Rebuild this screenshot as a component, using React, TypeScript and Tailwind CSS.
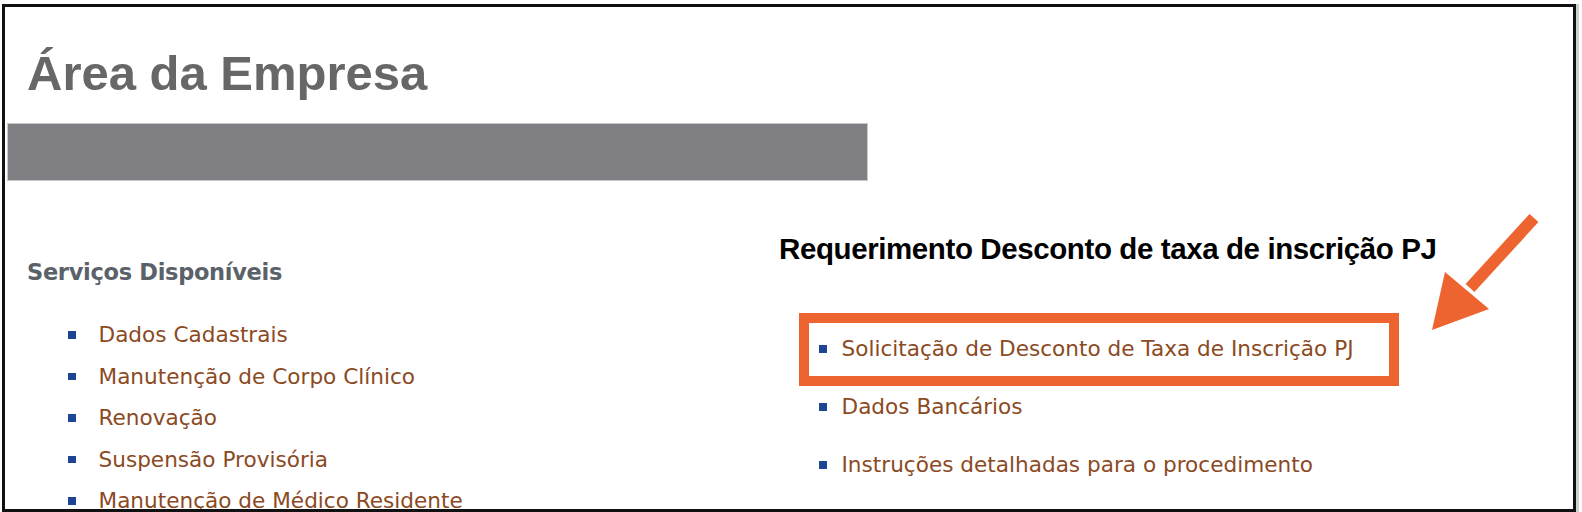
import React from 'react';

const leftItems = [
  'Dados Cadastrais',
  'Manutenção de Corpo Clínico',
  'Renovação',
  'Suspensão Provisória',
  'Manutenção de Médico Residente',
];

const rightItems = [
  'Solicitação de Desconto de Taxa de Inscrição PJ',
  'Dados Bancários',
  'Instruções detalhadas para o procedimento',
];

const Bullet = () => <span className="block w-[7.5px] h-[7.5px] bg-[#1e4494] shrink-0" />;

export default function App() {
  return (
    <div className="w-[1582px] h-[512px] bg-white overflow-hidden pt-[4px] pl-[2px]">
      <div className="relative w-[1574px] h-[508px] border-[3px] border-[#111] overflow-hidden shadow-[3px_0_0_#cfcfcf] font-['Liberation_Sans',Arial,sans-serif]">
        <h1 className="ml-[22px] mt-[42px] text-[49px] leading-[49px] font-bold text-[#676767]">
          Área da Empresa
        </h1>
        <div className="ml-[2px] mt-[25px] w-[861px] h-[58px] bg-[#808084] border border-[#c9c9cc]" />

        <div className="flex">
          {/* serviços */}
          <div className="w-[752px] pl-[22px] pt-[76px] font-['DejaVu_Sans',Verdana,sans-serif]">
            <h2 className="text-[22.5px] leading-[30px] font-bold tracking-[-0.3px] text-[#5b6168]">
              Serviços Disponíveis
            </h2>
            <ul className="mt-[27px]">
              {leftItems.map((item) => (
                <li key={item} className="flex items-center h-[41.5px] pl-[41px] gap-[23px]">
                  <Bullet />
                  <span className="text-[21.6px] leading-[41.5px] text-[#8b4a1f] whitespace-nowrap">{item}</span>
                </li>
              ))}
            </ul>
          </div>

          {/* requerimento */}
          <div className="flex-1 pl-[22px] pt-[51px]">
            <h2 className="text-[29.5px] leading-[34px] font-bold tracking-[-0.4px] text-black whitespace-nowrap">
              Requerimento Desconto de taxa de inscrição PJ
            </h2>
            <ul className="mt-[54px] font-['DejaVu_Sans',Verdana,sans-serif]">
              {rightItems.map((item) => (
                <li key={item} className="flex items-center h-[58px] pl-[40px] gap-[15px]">
                  <Bullet />
                  <span className="text-[21.6px] leading-[58px] text-[#8b4a1f] whitespace-nowrap">{item}</span>
                </li>
              ))}
            </ul>
          </div>
        </div>

        {/* destaque */}
        <div className="absolute left-[794px] top-[306px] w-[600px] h-[73px] border-[10px] border-[#ee6431]" />
        <svg
          className="absolute left-[1410px] top-[200px]"
          width="140"
          height="140"
          viewBox="1415 207 140 140"
        >
          <line x1="1534" y1="218" x2="1470" y2="288" stroke="#ee6431" strokeWidth="12" />
          <polygon points="1445,272 1489,309 1432,330" fill="#ee6431" />
        </svg>
      </div>
    </div>
  );
}
